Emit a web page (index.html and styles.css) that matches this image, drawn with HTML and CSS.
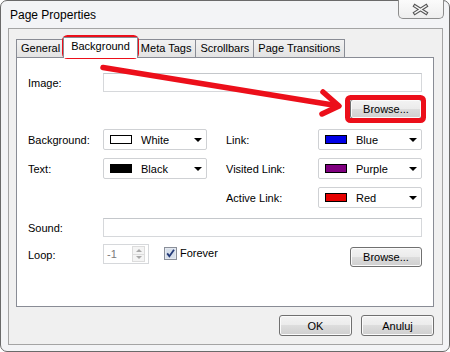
FILE: index.html
```html
<!DOCTYPE html>
<html>
<head>
    <link rel="stylesheet" href="styles.css">
</head>
<body>
    <div class="window">
        <div class="titlebar">
            <span class="title">Page Properties</span>
            <div class="close">
                <svg width="44" height="18" viewBox="0 0 44 18">
                    <path d="M16 6 L27 13 M27 6 L16 13" stroke="#555" stroke-width="3.6" stroke-linecap="square" fill="none"/>
                    <path d="M16 6 L27 13 M27 6 L16 13" stroke="#fafafa" stroke-width="1.4" stroke-linecap="square" fill="none"/>
                </svg>
            </div>
        </div>

        <div class="client">
            <div class="tabs">
                <div class="tab">General</div>
                <div class="tab active">Background</div>
                <div class="tab">Meta Tags</div>
                <div class="tab">Scrollbars</div>
                <div class="tab">Page Transitions</div>
            </div>

            <div class="panel">
                <div class="row">
                    <span class="lbl">Image:</span>
                    <div class="field long"></div>
                </div>
                <div class="row row-browse">
                    <button class="btn browse">Browse...</button>
                </div>
                <div class="row row-combo first">
                    <span class="lbl">Background:</span>
                    <div class="combo"><span class="swatch white"></span>White<span class="caret"></span></div>
                    <span class="lbl lbl-right">Link:</span>
                    <div class="combo"><span class="swatch blue"></span>Blue<span class="caret"></span></div>
                </div>
                <div class="row row-combo">
                    <span class="lbl">Text:</span>
                    <div class="combo"><span class="swatch black"></span>Black<span class="caret"></span></div>
                    <span class="lbl lbl-right">Visited Link:</span>
                    <div class="combo"><span class="swatch purple"></span>Purple<span class="caret"></span></div>
                </div>
                <div class="row row-combo">
                    <span class="lbl lbl-right indent">Active Link:</span>
                    <div class="combo"><span class="swatch red"></span>Red<span class="caret"></span></div>
                </div>
                <div class="row row-sound">
                    <span class="lbl">Sound:</span>
                    <div class="field long"></div>
                </div>
                <div class="row row-loop">
                    <span class="lbl">Loop:</span>
                    <div class="spin">
                        <span class="spin-value">-1</span>
                        <span class="spin-btns"><i class="up"></i><i class="down"></i></span>
                    </div>
                    <span class="check">
                        <svg width="13" height="13" viewBox="0 0 13 13">
                            <rect x="0.5" y="0.5" width="12" height="12" fill="#e4e9f1" stroke="#8a8f99"/>
                            <rect x="2" y="2" width="9" height="9" fill="#d7dfea"/>
                            <path d="M3.2 6.4 L5.4 9.2 L10 2.8" stroke="#233a78" stroke-width="1.8" fill="none"/>
                        </svg>
                        Forever
                    </span>
                    <button class="btn browse">Browse...</button>
                </div>
            </div>

            <div class="footer">
                <button class="btn wide">OK</button>
                <button class="btn wide">Anuluj</button>
            </div>
        </div>

        <!-- red annotation marks drawn over the dialog -->
        <svg class="marks" width="450" height="352" viewBox="0 0 450 352">
            <rect x="64.5" y="37.5" width="72" height="19" rx="3" fill="none" stroke="#ec0f1a" stroke-width="5"/>
            <rect x="347.5" y="97.5" width="76" height="23" rx="3" fill="none" stroke="#ec0f1a" stroke-width="5"/>
            <path d="M103 67.5 L336 105.5" stroke="#ec0f1a" stroke-width="5.5" stroke-linecap="round"/>
            <path d="M323 92 L339 106 L322 114" stroke="#ec0f1a" stroke-width="5.5" stroke-linecap="round" stroke-linejoin="round" fill="none"/>
        </svg>
    </div>
</body>
</html>
```

FILE: styles.css
```css
body {
    margin: 0;
    font-family: "Liberation Sans", Arial, sans-serif;
    font-size: 11px;
    color: #000;
    background: #fff;
}

.window {
    position: relative;
    width: 450px;
    height: 352px;
    box-sizing: border-box;
    border: 1px solid #6a6a6a;
    border-radius: 7px;
    background: #f3f4f6;
    display: flex;
    flex-direction: column;
}

.titlebar {
    height: 27px;
    display: flex;
    align-items: flex-start;
}

.title {
    font-size: 12px;
    padding: 7px 0 0 9px;
    line-height: 15px;
}

.close {
    margin-left: auto;
    margin-right: 5px;
    margin-top: -1px;
    width: 44px;
    height: 18px;
    border: 1px solid #8c8c8c;
    border-top: none;
    border-radius: 0 0 5px 5px;
    background: linear-gradient(#fbfbfb, #eeeeee);
}

.client {
    flex: 1;
    margin: 0 6px 6px 7px;
    border: 1px solid #a4a4a4;
    background: #f0f0f0;
    padding: 10px 8px 0 7px;
    display: flex;
    flex-direction: column;
}

.tabs {
    height: 18px;
    display: flex;
    align-items: flex-end;
}

.tab {
    height: 18px;
    box-sizing: border-box;
    padding: 0 4px;
    line-height: 17px;
    border: 1px solid #898c95;
    border-bottom: none;
    border-left: none;
    background: linear-gradient(#f2f2f2, #e3e3e3);
    white-space: nowrap;
}

.tab:first-child {
    border-left: 1px solid #898c95;
}

.tab.active {
    position: relative;
    z-index: 1;
    height: 21px;
    margin: 0 -1px -1px -2px;
    padding: 0 7px;
    line-height: 17px;
    border-left: 1px solid #898c95;
    background: #fff;
}

.panel {
    height: 250px;
    box-sizing: border-box;
    border: 1px solid #898c95;
    background: #fff;
    padding: 15px 10px 0 11px;
}

.row {
    display: flex;
    align-items: center;
    height: 19px;
}

.row-browse {
    height: 20px;
    margin-top: 7px;
    justify-content: flex-end;
}

.row-combo {
    height: 21px;
    margin-top: 8px;
}

.row-combo.first {
    margin-top: 10px;
}

.row-sound {
    margin-top: 10px;
}

.row-loop {
    height: 22px;
    margin-top: 7px;
}

.lbl {
    width: 75px;
    flex: none;
    white-space: nowrap;
}

.lbl-right {
    width: 92px;
    margin-left: 19px;
}

.lbl-right.indent {
    margin-left: 198px;
}

.field {
    height: 19px;
    box-sizing: border-box;
    border: 1px solid #d6d8db;
    border-top-color: #c4c7cb;
    background: #fff;
}

.field.long {
    width: 319px;
}

.combo {
    width: 104px;
    height: 21px;
    box-sizing: border-box;
    border: 1px solid #cfd1d4;
    border-radius: 2px;
    background: #fff;
    display: flex;
    align-items: center;
    padding-left: 6px;
}

.swatch {
    width: 22px;
    height: 9px;
    box-sizing: border-box;
    border: 1px solid #000;
    margin-right: 9px;
}

.swatch.white { background: #fff; }
.swatch.black { background: #000; }
.swatch.blue { background: #0000e6; }
.swatch.purple { background: #800080; }
.swatch.red { background: #e60000; }

.caret {
    margin-left: auto;
    margin-right: 4px;
    width: 0;
    height: 0;
    border-left: 4px solid transparent;
    border-right: 4px solid transparent;
    border-top: 4px solid #000;
}

.btn {
    font-family: inherit;
    font-size: 11px;
    color: #000;
    height: 20px;
    padding: 0;
    border: 1px solid #707070;
    border-radius: 3px;
    background: linear-gradient(#f3f3f3 0%, #ebebeb 50%, #dddddd 50%, #cfcfcf 100%);
    box-shadow: inset 0 0 0 1px #fbfbfb;
}

.btn.browse {
    width: 72px;
    margin-right: 1px;
}

.row-loop .btn.browse {
    margin-left: auto;
    margin-top: 3px;
}

.spin {
    width: 46px;
    height: 20px;
    box-sizing: border-box;
    border: 1px solid #d6d8db;
    display: flex;
    align-items: center;
    margin-top: -2px;
}

.spin-value {
    color: #7a7a7a;
    padding-left: 3px;
    flex: 1;
}

.spin-btns {
    width: 13px;
    height: 16px;
    margin-right: 3px;
    display: flex;
    flex-direction: column;
}

.spin-btns i {
    flex: 1;
    border: 1px solid #dcdcdc;
    background: #f4f4f4;
    display: flex;
    align-items: center;
    justify-content: center;
}

.spin-btns i + i {
    border-top: none;
}

.spin-btns .up::after {
    content: "";
    border-left: 3px solid transparent;
    border-right: 3px solid transparent;
    border-bottom: 3px solid #a8a8a8;
}

.spin-btns .down::after {
    content: "";
    border-left: 3px solid transparent;
    border-right: 3px solid transparent;
    border-top: 3px solid #a8a8a8;
}

.check {
    display: flex;
    align-items: center;
    gap: 3px;
    margin-left: 15px;
    margin-top: -3px;
    line-height: 13px;
}

.footer {
    display: flex;
    justify-content: flex-end;
    gap: 9px;
    margin-top: 8px;
}

.btn.wide {
    width: 73px;
    height: 21px;
}

.marks {
    position: absolute;
    left: -1px;
    top: -1px;
    pointer-events: none;
}
```
